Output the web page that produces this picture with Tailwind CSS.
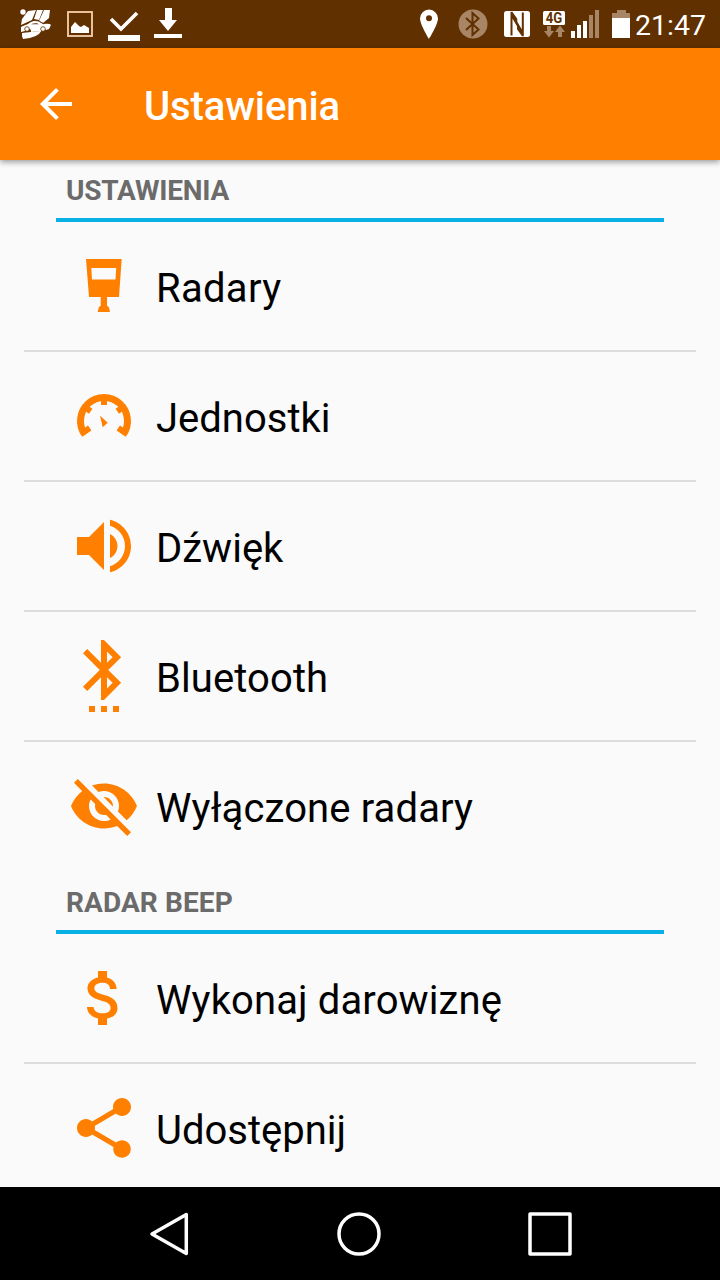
<!DOCTYPE html>
<html lang="pl">
<head>
  <meta charset="UTF-8" />
  <meta name="viewport" content="width=device-width, initial-scale=1.0"/>
  <title>Ustawienia</title>
  <script src="https://cdn.jsdelivr.net/npm/@tailwindcss/browser@4"></script>
</head>
<body class="bg-[#fafafa] font-['Roboto',sans-serif]">
  <div class="flex flex-col w-[720px] h-[1280px] overflow-hidden">

    <!-- Pasek stanu -->
    <div class="flex h-12 shrink-0 bg-[#613000] text-white">
      <svg class="w-[200px] h-12" viewBox="0 0 200 48" fill="#fff">
        <circle cx="23" cy="12" r="2.7"/>
        <path d="M28 11l8-1-4 10-11 5 1-6zM37 10h6l-4 10-5-1zM44 10h6l-1 8-6 5-4-2z"/>
        <path d="M21 27q3-2 7-3 4-4 10-3l5 3q7-1 8 1l-2 4-3 1a3 3 0 0 0-5 1l-10 1a3 3 0 0 0-6-1l-4 1z"/>
        <path d="M22 33l18-2 2-1q-4 8-19 9l-1-3z"/>
        <path d="M21 26q4-1 7-3 5-4 11-2l5 3" fill="none" stroke="#613000" stroke-width=".8"/>
        <circle cx="27" cy="29" r="2.300" stroke="#613000" stroke-width=".8"/><circle cx="43" cy="29" r="2.300" stroke="#613000" stroke-width=".8"/>
        <path d="M31 24.300q3-1.500 6-1l2 1z" fill="#613000"/>
        <rect x="68" y="12" width="24" height="24" fill="none" stroke="#f8d2ac" stroke-width="1.8"/>
        <path d="M71 33v-6l4-5 4 4 2 1 3-2 5 3v5z"/>
        <path d="M111 19l10 10 16-16" fill="none" stroke="#fff" stroke-width="3.6"/>
        <rect x="108" y="35" width="32" height="6"/>
        <path d="M165 8h7v12h5l-9 11-9-11h6z"/>
        <rect x="154" y="34" width="28" height="4"/>
      </svg>
      <svg class="ml-auto w-[235px] h-12" viewBox="400 0 235 48" fill="#fff">
        <path fill-rule="evenodd" d="M429 9.500a9 9 0 0 0-9 9c0 6 9 20.500 9 20.500s9-14.500 9-20.500a9 9 0 0 0-9-9zm0 5.700a3 3 0 1 1 0 6 3 3 0 0 1 0-6z"/>
        <circle cx="473" cy="24" r="14.500" fill="#a78565"/>
        <path d="M466 18l12.500 11.500-6 5.500V13l6 5.500L466 30" fill="none" stroke="#613000" stroke-width="2"/>
        <rect x="504" y="11" width="26" height="26" rx="2.500"/>
        <path d="M511.500 35.500V15l6.500 11v3l5 7M522.800 12.500V33l-6.500-11v-3l-5-7" fill="none" stroke="#613000" stroke-width="2"/>
        <rect x="543" y="11" width="22" height="14" rx="1.500"/>
        <text x="554" y="23" text-anchor="middle" font-size="14" font-weight="700" textLength="16.500" lengthAdjust="spacingAndGlyphs" fill="#613000">4G</text>
        <path d="M547 26h4v5h3l-5 6.500-5-6.500h3zM558 37h4v-5h3l-5-6.500-5 6.500h3z" fill="#a78565"/>
        <rect x="571" y="31" width="4" height="7"/><rect x="577" y="25" width="4" height="13"/><rect x="583" y="21" width="4" height="17"/>
        <rect x="589" y="15" width="4" height="23" fill="#a78565"/><rect x="595" y="10" width="4" height="28" fill="#a78565"/>
        <path d="M617 10h9v3h4v5h-18v-5h5z" fill="#a78565"/>
        <rect x="612" y="18" width="18" height="20"/>
      </svg>
      <span class="w-[85px] text-[28.5px] leading-[52px]">21:47</span>
    </div>

    <!-- Nagłówek -->
    <header class="relative flex items-center h-28 shrink-0 pl-8 bg-[#ff8000] text-white shadow-[0_2px_6px_rgba(0,0,0,0.4)]">
      <svg class="w-12 h-12" viewBox="0 0 24 24" fill="currentColor"><path d="M20 11H7.830l5.590-5.590L12 4l-8 8 8 8 1.410-1.410L7.830 13H20v-2z"/></svg>
      <h1 class="ml-16 pt-1.5 text-[40px] leading-[48px] font-medium tracking-[-0.1px]">Ustawienia</h1>
    </header>

    <!-- Lista ustawień -->
    <main class="flex-1 min-h-0 overflow-hidden px-6">
      <h2 class="mx-8 h-[62px] px-2.5 border-b-4 border-[#08b0e6] text-[28px] leading-[62px] font-bold tracking-[-0.2px] text-[#6b6b6b]">USTAWIENIA</h2>
      <ul>
        <li class="flex items-center h-[130px] pl-11 border-b-2 border-[#dcdcdc]">
          <svg class="size-[72px]" viewBox="0 0 72 72" fill="#ff8000"><path fill-rule="evenodd" d="M18 9h35.700l-2.700 38H39v8.500l2 2 1 4.500H29.700l1-4.500 2-2V47H21zM23.300 18l.7 11.500h23.500l.7-11.500z"/></svg>
          <span class="ml-4 pt-1.5 text-[40px] leading-[48px] tracking-[0.3px]">Radary</span>
        </li>
        <li class="flex items-center h-[130px] pl-11 border-b-2 border-[#dcdcdc]">
          <svg class="size-[72px]" viewBox="0 0 72 72" fill="none" stroke="#ff8000">
            <path d="M17 54.800A23.500 23.500 0 1 1 55 54.800" stroke-width="7"/>
            <path d="M36 17v8M18.200 28.100l4.500 3.200M53.800 28.100l-4.500 3.200M14.300 53.100l7.400-5.100M57.700 53.100l-7.400-5.100" stroke-width="6"/>
            <path d="M32 35.500l7.700 7.200-5 4.600z" fill="#ff8000" stroke="none"/>
          </svg>
          <span class="ml-4 pt-1.5 text-[40px] leading-[48px]">Jednostki</span>
        </li>
        <li class="flex items-center h-[130px] pl-11 border-b-2 border-[#dcdcdc]">
          <svg class="size-[72px]" viewBox="0 0 24 24" fill="#ff8000"><path d="M3 9v6h4l5 5V4L7 9H3zm13.500 3c0-1.770-1.020-3.290-2.500-4.030v8.050c1.480-.730 2.500-2.250 2.500-4.020zM14 3.230v2.060c2.890.860 5 3.540 5 6.710s-2.110 5.850-5 6.710v2.060c4.010-.910 7-4.490 7-8.770s-2.990-7.860-7-8.770z"/></svg>
          <span class="ml-4 pt-1.5 text-[40px] leading-[48px]">Dźwięk</span>
        </li>
        <li class="flex items-center h-[130px] pl-11 border-b-2 border-[#dcdcdc]">
          <svg class="size-[72px]" viewBox="0 0 24 24" fill="#ff8000"><path d="M11 24h2v-2h-2v2zm-4 0h2v-2H7v2zm8 0h2v-2h-2v2zm2.710-18.290L12 0h-1v7.590L6.410 3 5 4.410 10.590 10 5 15.590 6.410 17 11 12.410V20h1l5.710-5.710-4.300-4.290 4.300-4.290zM13 3.830l1.880 1.880L13 7.590V3.830zm1.880 10.460L13 16.170v-3.760l1.880 1.880z"/></svg>
          <span class="ml-4 pt-1.5 text-[40px] leading-[48px] tracking-[0.1px]">Bluetooth</span>
        </li>
        <li class="flex items-center h-[130px] pl-11 border-b-2 border-transparent">
          <svg class="size-[72px]" viewBox="0 0 24 24" fill="#ff8000"><path d="M12 7c2.760 0 5 2.240 5 5 0 .650-.130 1.260-.360 1.830l2.920 2.920c1.510-1.260 2.700-2.890 3.430-4.750-1.730-4.390-6-7.500-11-7.500-1.400 0-2.740.250-3.980.700l2.160 2.160C10.740 7.130 11.350 7 12 7zM2 4.270l2.280 2.280.460.460C3.080 8.300 1.780 10.020 1 12c1.730 4.390 6 7.500 11 7.500 1.550 0 3.030-.300 4.380-.840l.420.420L19.730 22 21 20.730 3.270 3 2 4.270zM7.530 9.800l1.550 1.550c-.050.210-.080.430-.080.650 0 1.660 1.340 3 3 3 .220 0 .440-.030.650-.080l1.550 1.550c-.670.330-1.410.530-2.200.530-2.760 0-5-2.240-5-5 0-.790.200-1.530.530-2.200zm4.310-.780l3.150 3.150.020-.160c0-1.660-1.340-3-3-3l-.170.010z"/></svg>
          <span class="ml-4 pt-1.5 text-[40px] leading-[48px] tracking-[0.12px]">Wyłączone radary</span>
        </li>
      </ul>
      <h2 class="mx-8 h-[62px] px-2.5 border-b-4 border-[#08b0e6] text-[28px] leading-[62px] font-bold tracking-[0.1px] text-[#6b6b6b]">RADAR BEEP</h2>
      <ul>
        <li class="flex items-center h-[130px] pl-11 border-b-2 border-[#dcdcdc]">
          <svg class="size-[72px]" viewBox="0 0 24 24" fill="#ff8000"><path d="M11.800 10.900c-2.270-.590-3-1.200-3-2.150 0-1.090 1.010-1.850 2.700-1.850 1.780 0 2.440.850 2.500 2.100h2.210c-.070-1.720-1.120-3.300-3.210-3.810V3h-3v2.160c-1.940.420-3.500 1.680-3.500 3.610 0 2.310 1.910 3.460 4.700 4.130 2.500.600 3 1.480 3 2.410 0 .690-.490 1.790-2.700 1.790-2.060 0-2.870-.920-2.980-2.100h-2.200c.120 2.190 1.760 3.420 3.680 3.830V21h3v-2.150c1.950-.370 3.500-1.500 3.500-3.550 0-2.840-2.430-3.810-4.700-4.400z"/></svg>
          <span class="ml-4 pt-1.5 text-[40px] leading-[48px] tracking-[0.12px]">Wykonaj darowiznę</span>
        </li>
        <li class="flex items-center h-[130px] pl-11 border-b-2 border-[#dcdcdc]">
          <svg class="size-[72px]" viewBox="0 0 24 24" fill="#ff8000"><path d="M18 16.080c-.760 0-1.440.300-1.960.770L8.910 12.700c.050-.230.090-.460.090-.700s-.040-.470-.090-.700l7.050-4.110c.540.500 1.250.810 2.040.810 1.660 0 3-1.340 3-3s-1.340-3-3-3-3 1.340-3 3c0 .240.040.470.090.700L8.040 9.810C7.500 9.310 6.790 9 6 9c-1.660 0-3 1.340-3 3s1.340 3 3 3c.790 0 1.500-.310 2.040-.810l7.120 4.160c-.050.210-.080.430-.080.650 0 1.610 1.310 2.920 2.920 2.920 1.610 0 2.920-1.310 2.920-2.920s-1.310-2.920-2.920-2.920z"/></svg>
          <span class="ml-4 pt-1.5 text-[40px] leading-[48px]">Udostępnij</span>
        </li>
      </ul>
    </main>

    <!-- Pasek nawigacji -->
    <nav class="h-[93px] shrink-0 bg-black">
      <svg class="w-[720px] h-[93px]" viewBox="0 1187 720 93" fill="none" stroke="#fff" stroke-width="3.500" stroke-linejoin="round">
        <path d="M186.300 1214.500v39L152 1234z"/>
        <circle cx="359" cy="1234" r="20"/>
        <rect x="530" y="1214" width="40" height="40"/>
      </svg>
    </nav>
  </div>
</body>
</html>
